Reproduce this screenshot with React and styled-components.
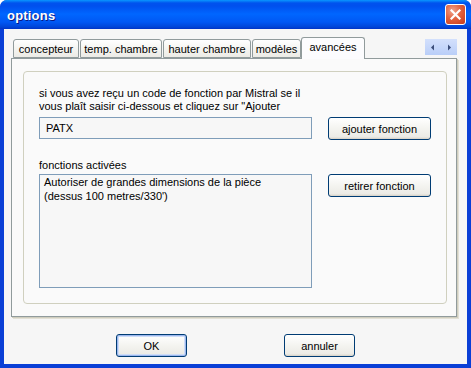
import React from "react";
import styled, { createGlobalStyle } from "styled-components";

const GlobalStyle = createGlobalStyle`
  html, body { margin: 0; padding: 0; background: #ffffff; }
  body { font-family: "Liberation Sans", Arial, sans-serif; font-size: 11px; color: #000; }
`;

const Window = styled.div`
  width: 471px;
  height: 368px;
  display: flex;
  flex-direction: column;
  box-sizing: border-box;
  background: #0A3FD6;
  border-radius: 7px 7px 0 0;
  overflow: hidden;
`;

const TitleBar = styled.div`
  height: 29px;
  flex: none;
  display: flex;
  align-items: center;
  justify-content: space-between;
  padding: 0 5px 0 7px;
  background: linear-gradient(
    to bottom,
    #0997FF 0px,
    #0053EE 3px,
    #0050EE 6px,
    #0066FF 14px,
    #0058F4 22px,
    #0045D8 27px,
    #0033C6 29px
  );
`;

const Title = styled.span`
  font-family: "Liberation Sans", Arial, sans-serif;
  font-weight: bold;
  font-size: 13px;
  color: #ffffff;
  text-shadow: 1px 1px 0 #0A1883;
  letter-spacing: 0.2px;
  margin-top: 1px;
`;

const CloseButton = styled.div`
  width: 19px;
  height: 19px;
  border: 1px solid #ffffff;
  border-radius: 3px;
  background: radial-gradient(circle at 35% 30%, #F0A48E 0%, #E2623F 45%, #C6391A 100%);
  display: flex;
  align-items: center;
  justify-content: center;
  margin-bottom: 1px;
`;

const Client = styled.div`
  flex: 1;
  margin: 0 4px 4px 4px;
  background: #F6F6F6;
  display: flex;
  flex-direction: column;
  padding: 7px 10px 0 7px;
`;

const TabStrip = styled.div`
  height: 22px;
  display: flex;
  align-items: flex-end;
  position: relative;
  z-index: 1;
  margin-left: 2px;
`;

const Tab = styled.div`
  box-sizing: border-box;
  width: ${(p) => p.$w}px;
  height: ${(p) => (p.$active ? 22 : 19)}px;
  margin-left: ${(p) => (p.$active ? -1 : 0)}px;
  margin-right: ${(p) => (p.$active ? 0 : 1)}px;
  margin-bottom: ${(p) => (p.$active ? -1 : 0)}px;
  border: 1px solid #919B9C;
  border-bottom: ${(p) => (p.$active ? "none" : "1px solid #919B9C")};
  border-radius: 3px 3px 0 0;
  background: ${(p) =>
    p.$active ? "#FCFCFE" : "linear-gradient(to bottom, #FFFFFF, #F3F3EF 60%, #ECEBE6)"};
  display: flex;
  align-items: ${(p) => (p.$active ? "flex-start" : "center")};
  justify-content: center;
  padding-top: ${(p) => (p.$active ? 3 : 0)}px;
  font-size: 11px;
  color: #000;
  white-space: nowrap;
`;

const Spacer = styled.div`
  flex: 1;
`;

const Spin = styled.div`
  display: flex;
  align-self: flex-start;
  margin-top: 3px;
`;

const SpinButton = styled.div`
  width: 16px;
  height: 16px;
  background: linear-gradient(to bottom, #D3E0FC, #B9CEF8);
  display: flex;
  align-items: center;
  justify-content: center;
`;

const TabPanel = styled.div`
  box-sizing: border-box;
  height: 259px;
  border: 1px solid #919B9C;
  background: #FAFAFA;
  box-shadow: 1px 1px 0 #D0CEBF, 2px 2px 0 #E3E1D6;
  padding: 12px 9px 0 11px;
`;

const GroupBox = styled.div`
  box-sizing: border-box;
  height: 233px;
  border: 1px solid #D0D0BF;
  border-radius: 4px;
  padding: 15px 0 0 15px;
  display: grid;
  grid-template-columns: 273px 103px;
  column-gap: 16px;
  align-content: start;
`;

const Paragraph = styled.p`
  grid-column: 1 / span 2;
  margin: 0;
  font-size: 11px;
  line-height: 13px;
  height: 30px;
`;

const TextInput = styled.div`
  box-sizing: border-box;
  height: 22px;
  border: 1px solid #7F9DB9;
  background: #F7F7F7;
  padding: 0 6px;
  display: flex;
  align-items: center;
  font-size: 11px;
`;

const Button = styled.div`
  box-sizing: border-box;
  width: ${(p) => p.$w || 103}px;
  height: 23px;
  border: 1px solid #003C74;
  border-radius: 3px;
  background: linear-gradient(to bottom, #FFFFFF 0%, #F4F4F0 50%, #ECEBE6 90%, #D6D0C5 100%);
  box-shadow: ${(p) => (p.$default ? "inset 0 0 0 1px #9CB7EE, inset 0 0 0 2px #CEDDF7" : "none")};
  display: flex;
  align-items: center;
  justify-content: center;
  font-size: 11px;
  color: #000;
  align-self: start;
`;

const Label = styled.div`
  grid-column: 1 / span 2;
  margin-top: 19px;
  height: 15px;
  font-size: 11px;
  line-height: 13px;
`;

const ListBox = styled.div`
  box-sizing: border-box;
  height: 114px;
  border: 1px solid #7F9DB9;
  background: #F7F7F7;
  padding: 0 4px;
  font-size: 11px;
  line-height: 14px;
`;

const Footer = styled.div`
  flex: 1;
  display: flex;
  align-items: flex-start;
  padding-top: 17px;
  padding-left: 105px;
  gap: 97px;
`;

export default function App() {
  return (
    <>
      <GlobalStyle />
      <Window>
        <TitleBar>
          <Title>options</Title>
          <CloseButton>
            <svg width="11" height="11" viewBox="0 0 11 11">
              <path d="M1.5 1.5 L9.5 9.5 M9.5 1.5 L1.5 9.5" stroke="#fff" strokeWidth="2.2" strokeLinecap="square" />
            </svg>
          </CloseButton>
        </TitleBar>
        <Client>
          <TabStrip>
            <Tab $w={66}>concepteur</Tab>
            <Tab $w={82}>temp. chambre</Tab>
            <Tab $w={88}>hauter chambre</Tab>
            <Tab $w={49}>modèles</Tab>
            <Tab $w={64} $active>avancées</Tab>
            <Spacer />
            <Spin>
              <SpinButton>
                <svg width="6" height="7" viewBox="0 0 6 7">
                  <path d="M4 0.5 L1 3.5 L4 6.5 Z" fill="#3C4E7A" />
                </svg>
              </SpinButton>
              <SpinButton>
                <svg width="6" height="7" viewBox="0 0 6 7">
                  <path d="M2 0.5 L5 3.5 L2 6.5 Z" fill="#3C4E7A" />
                </svg>
              </SpinButton>
            </Spin>
          </TabStrip>
          <TabPanel>
            <GroupBox>
              <Paragraph>
                si vous avez reçu un code de fonction par Mistral se il
                <br />
                vous plaît saisir ci-dessous et cliquez sur "Ajouter
              </Paragraph>
              <TextInput>PATX</TextInput>
              <Button>ajouter fonction</Button>
              <Label>fonctions activées</Label>
              <ListBox>
                Autoriser de grandes dimensions de la pièce
                <br />
                (dessus 100 metres/330')
              </ListBox>
              <Button>retirer fonction</Button>
            </GroupBox>
          </TabPanel>
          <Footer>
            <Button $w={71} $default>OK</Button>
            <Button $w={71}>annuler</Button>
          </Footer>
        </Client>
      </Window>
    </>
  );
}
